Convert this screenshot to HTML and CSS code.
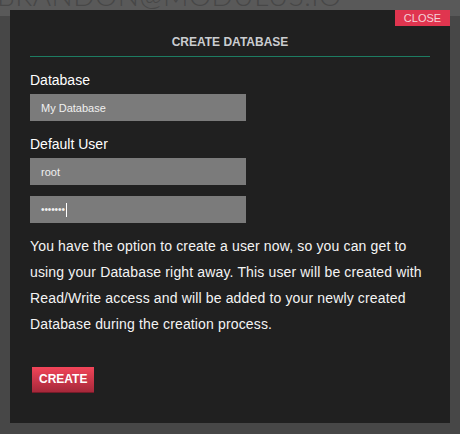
FILE: index.html
```html
<!DOCTYPE html>
<html>
<head>
<meta charset="utf-8">
<title>Create Database</title>
<link rel="stylesheet" href="styles.css">
</head>
<body>
<div class="topbar"><span class="brand">BRANDON@MODULUS.IO</span></div>
<div class="modal">
  <button class="close-btn" type="button">CLOSE</button>
  <h2 class="modal-title">CREATE DATABASE</h2>
  <form class="form">
    <label class="field-label" for="db">Database</label>
    <input class="field" id="db" type="text" value="My Database">
    <label class="field-label" for="user">Default User</label>
    <input class="field" id="user" type="text" value="root">
    <div class="field field-pass"><span class="dots">•••••••</span><span class="caret"></span></div>
    <p class="note">You have the option to create a user now, so you can get to using your Database right away. This user will be created with Read/Write access and will be added to your newly created Database during the creation process.</p>
    <button class="create-btn" type="button">CREATE</button>
  </form>
</div>
</body>
</html>
```

FILE: styles.css
```css
html, body {
  margin: 0;
  padding: 0;
}
body {
  background: #474747;
  font-family: "Liberation Sans", Arial, sans-serif;
  height: 434px;
  overflow: hidden;
}
.topbar {
  height: 16px;
  background: #595959;
  overflow: hidden;
}
.brand {
  display: block;
  margin-top: -19px;
  margin-left: -3px;
  font-family: Lato, "DejaVu Sans", sans-serif;
  font-weight: 300;
  font-size: 28px;
  line-height: 28px;
  letter-spacing: 0.5px;
  color: #474747;
  white-space: nowrap;
}
.modal {
  position: absolute;
  top: 10px;
  left: 10px;
  width: 440px;
  height: 413px;
  box-sizing: border-box;
  padding: 25px 20px 0;
  background: #202020;
}
.close-btn {
  position: absolute;
  top: 0;
  right: 0;
  width: 55px;
  height: 16px;
  padding: 0;
  border: 0;
  background: #e0354f;
  color: #f4d2d8;
  font-family: "Liberation Sans", Arial, sans-serif;
  font-size: 11px;
  line-height: 16px;
  text-align: center;
}
.modal-title {
  margin: 0;
  padding-bottom: 7px;
  border-bottom: 1px solid #1d7c62;
  font-size: 12px;
  line-height: 14px;
  font-weight: bold;
  color: #cbcdd0;
  text-align: center;
}
.form {
  display: flex;
  flex-direction: column;
  align-items: flex-start;
}
.field-label {
  margin: 15px 0 6px;
  font-size: 14px;
  line-height: 16px;
  color: #ffffff;
}
.field {
  width: 216px;
  height: 27px;
  box-sizing: border-box;
  padding: 0 11px;
  border: 0;
  outline: none;
  background: #7b7b7b;
  color: #f0f0f0;
  font-family: "Liberation Sans", Arial, sans-serif;
  font-size: 11px;
}
.field-pass {
  margin-top: 11px;
  display: flex;
  align-items: center;
}
.dots {
  font-size: 10px;
  line-height: 27px;
  letter-spacing: -0.1px;
  color: #f0f0f0;
}
.caret {
  width: 1px;
  height: 14px;
  margin-left: 1px;
  background: #ffffff;
}
.note {
  margin: 10px 0 0;
  font-size: 14px;
  line-height: 26px;
  letter-spacing: 0.15px;
  color: #f4f4f4;
}
.create-btn {
  margin: 30px 0 0 2px;
  height: 26px;
  padding: 0 7px;
  border: 0;
  border-bottom: 1px solid #761b29;
  background: linear-gradient(#f24559, #a6283a);
  color: #ffffff;
  font-family: "Liberation Sans", Arial, sans-serif;
  font-size: 12px;
  font-weight: bold;
  line-height: 25px;
}
```
